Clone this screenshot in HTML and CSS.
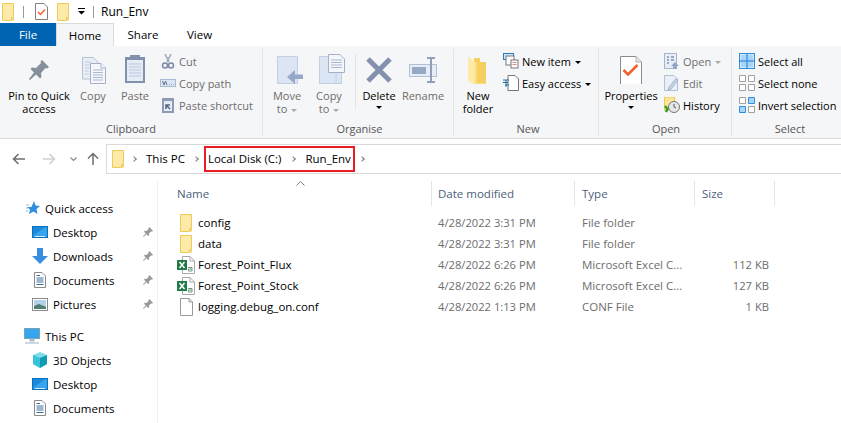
FILE: index.html
```html
<!DOCTYPE html>
<html lang="en">
<head>
<meta charset="utf-8">
<title>Run_Env</title>
<link rel="stylesheet" href="styles.css">
</head>
<body>
<svg class="defs" width="0" height="0" aria-hidden="true">
  <symbol id="folder" viewBox="0 0 14 18">
    <path d="M1.500 .5H12.500V14.500H10.500V17.500H1.500Z" fill="#fde9a8" stroke="#edcb5a"/>
    <path d="M11 15H13V17.500H11Z" fill="#f3d36e"/>
  </symbol>
  <symbol id="pin" viewBox="0 0 16 16">
    <path d="M10 0L16 6L14.500 7.500L13 7L9.500 10.500L10 13L8.500 14.500L5.500 11.500L1 16L0 15L4.500 10.500L1.500 7.500L3 6L5.500 6.500L9 3L8.500 1.500Z" fill="#9a9a9a"/>
  </symbol>
  <symbol id="csv" viewBox="0 0 18 18">
    <path d="M5.500 .5H13L17.500 5V17.500H5.500Z" fill="#fff" stroke="#a9a9a9"/>
    <path d="M13 .5V5H17.500" fill="none" stroke="#a9a9a9"/>
    <rect x="0" y="4" width="10" height="10" fill="#1f7a45"/>
    <path d="M2.500 6L7.500 12M7.500 6L2.500 12" stroke="#fff" stroke-width="1.500"/>
    <path d="M11 11.500H15V15H11.500V13H15" fill="none" stroke="#6f9a80"/>
  </symbol>
  <symbol id="monitor" viewBox="0 0 16 13">
    <rect x=".5" y=".5" width="15" height="11" fill="#1a8ade" stroke="#0a6fbd"/>
    <path d="M1 10L13 1H15V11H1Z" fill="#38a4ec"/>
    <path d="M3 10.500H13" stroke="#d5eaf9"/>
  </symbol>
  <symbol id="doc" viewBox="0 0 12 16">
    <path d="M.5 .5H8L11.500 4V15.500H.5Z" fill="#fff" stroke="#8a8a8a"/>
    <path d="M2.500 3.500H6M2.500 6H9.500M2.500 8H9.500M2.500 10H9.500M2.500 12.500H9.500" stroke="#3d6f9d"/>
  </symbol>
</svg>

<header class="titlebar">
  <svg class="tb-folder"><use href="#folder"/></svg>
  <span class="tb-sep"></span>
  <svg class="tb-doc" viewBox="0 0 13 17"><path d="M.5 .5H9L12.500 4V16.500H.5Z" fill="#fff" stroke="#808080"/><path d="M3 9L5.500 11.500L10 6.500" fill="none" stroke="#f2602a" stroke-width="1.500"/></svg>
  <svg class="tb-folder tb-folder2"><use href="#folder"/></svg>
  <svg class="tb-drop" viewBox="0 0 7 7"><path d="M0 .5H7" stroke="#000"/><path d="M0 3H7L3.500 6.500Z" fill="#000"/></svg>
  <span class="tb-sep tb-sep2"></span>
  <span class="tb-title">Run_Env</span>
</header>

<nav class="tabs">
  <span class="tab tab-file">File</span>
  <span class="tab tab-home">Home</span>
  <span class="tab tab-share">Share</span>
  <span class="tab tab-view">View</span>
</nav>

<section class="ribbon">
  <div class="group g-clipboard">
    <div class="tools">
      <div class="big w-pin">
        <svg class="big-ico" viewBox="0 0 32 32"><path d="M19 8L26 15L24.500 16.500L22.500 16L18 21L18.500 25L17 26.500L13 22.500L7 28L6 27L11 20.500L7.500 17L9 15.500L13 16L18 11L17.500 9.500Z" fill="#87909a"/></svg>
        <span>Pin to Quick</span><span>access</span>
      </div>
      <div class="big w-copy dim">
        <svg class="big-ico" viewBox="0 0 32 32"><path d="M5.500 5.500H16L21 10V27H5.500Z" fill="#e9edf5" stroke="#b6c1d6"/><path d="M8 10H14M8 13H18M8 16H18M8 19H12M8 22H12" stroke="#c3cee0"/><path d="M13.500 11.500H24L28.500 16V31.500H13.500Z" fill="#f4f6fa" stroke="#a3b0c9"/><path d="M24 11.500V16H28.500" fill="#fff" stroke="#a3b0c9"/><path d="M16 18H26M16 20.500H26M16 23H26M16 25.500H26M16 28H26" stroke="#a9b7cf"/></svg>
        <span>Copy</span>
      </div>
      <div class="big w-paste dim">
        <svg class="big-ico" viewBox="0 0 32 32"><rect x="6" y="5" width="20" height="26" fill="#8291ab"/><rect x="8" y="8" width="16" height="21" fill="#e6ecf6"/><path d="M10 12H22M10 15H22M10 18H22M10 21H22M10 24H22" stroke="#b8c6dc"/><rect x="11" y="3" width="10" height="5" fill="#8291ab"/></svg>
        <span>Paste</span>
      </div>
      <div class="smalls s-clip dim">
        <div class="small"><svg class="ico" viewBox="0 0 16 16"><path d="M5 1L9 9M11 1L7 9" stroke="#9aa4b5" stroke-width="1.500"/><circle cx="5" cy="12.500" r="2.500" fill="none" stroke="#7d8aa6" stroke-width="1.500"/><circle cx="11" cy="12.500" r="2.500" fill="none" stroke="#7d8aa6" stroke-width="1.500"/></svg><span>Cut</span></div>
        <div class="small"><svg class="ico" viewBox="0 0 16 16"><rect x=".5" y="4.500" width="15" height="7" fill="#dce6f4" stroke="#a8b8d0"/><path d="M2.500 6L4 10L5.500 6L7 10M9.500 9.500H10M11.500 9.500H12M13.500 9.500H14" stroke="#62718d" fill="none"/></svg><span>Copy path</span></div>
        <div class="small"><svg class="ico" viewBox="0 0 16 16"><rect x="2" y="1" width="12" height="15" fill="#8c9ab3"/><rect x="4" y="4" width="8" height="10" fill="#e6ecf6"/><path d="M6 12V8H10M6 8L10 12" stroke="#556480" stroke-width="1.500" fill="none"/></svg><span>Paste shortcut</span></div>
      </div>
    </div>
    <div class="group-label">Clipboard</div>
  </div>

  <div class="group g-organise">
    <div class="tools">
      <div class="big w-move dim">
        <svg class="big-ico" viewBox="0 0 32 32"><path d="M6.500 4.500H26.500V31.500H6.500Z" fill="#dbe5f3" stroke="#c2cfe2"/><path d="M32 22.500V27H24V32L16 25L24 18V22.500Z" fill="#95a9c6"/></svg>
        <span>Move</span><span>to <i class="caret caret-dim"></i></span>
      </div>
      <div class="big w-copyto dim">
        <svg class="big-ico" viewBox="0 0 32 32"><path d="M6.500 4.500H28.500V31.500H6.500Z" fill="#dbe5f3" stroke="#c2cfe2"/><path d="M23 31V5" stroke="#c2cfe2"/><path d="M15.500 2.500H27L31.500 7V20.500H15.500Z" fill="#f4f6fa" stroke="#a3b0c9"/><path d="M18 8H29M18 10.500H29M18 13H29M18 15.500H29" stroke="#a9b7cf"/></svg>
        <span>Copy</span><span>to <i class="caret caret-dim"></i></span>
      </div>
      <span class="inner-sep"></span>
      <div class="big w-delete">
        <svg class="big-ico" viewBox="0 0 32 32"><path d="M5 7L27 29M27 7L5 29" stroke="#8391ae" stroke-width="5"/></svg>
        <span>Delete</span><i class="caret"></i>
      </div>
      <div class="big w-rename dim">
        <svg class="big-ico" viewBox="0 0 32 32"><rect x="2.500" y="12.500" width="27" height="12" fill="#e6edf7" stroke="#b2c0d6"/><rect x="5" y="15" width="14" height="7" fill="#97a8c4"/><path d="M20 6H28M20 30H28M24 6V30" stroke="#8f9fbb" stroke-width="2"/></svg>
        <span>Rename</span>
      </div>
    </div>
    <div class="group-label">Organise</div>
  </div>

  <div class="group g-new">
    <div class="tools">
      <div class="big w-newf">
        <svg class="big-ico" viewBox="0 0 32 32"><path d="M12 6H18V10H24V31H12Z" fill="#f7cf60"/><path d="M6 5L13 10V33L6 29Z" fill="#fde9a8"/><path d="M13 10V33H24V31H15V10Z" fill="#fbdc7d"/></svg>
        <span>New</span><span>folder</span>
      </div>
      <div class="smalls s-new">
        <div class="small"><svg class="ico" viewBox="0 0 16 16"><rect x=".5" y=".5" width="10" height="6" fill="#cfe6f7" stroke="#2b7bb9"/><rect x="3" y="3" width="8" height="9" fill="#fff" stroke="#777"/><rect x="8" y="7" width="7" height="8" fill="#fff" stroke="#777"/><path d="M9.500 9.500H13.500M9.500 11.500H13.500" stroke="#d28a8a"/></svg><span>New item <i class="caret"></i></span></div>
        <div class="small"><svg class="ico" viewBox="0 0 16 16"><path d="M5 .5H12L15.500 4V15.500H5Z" fill="#fff" stroke="#777"/><path d="M0 5H6M0 7.500H5M2 10H6M3 5V12" stroke="#1f6fa8"/></svg><span>Easy access <i class="caret"></i></span></div>
      </div>
    </div>
    <div class="group-label">New</div>
  </div>

  <div class="group g-open">
    <div class="tools">
      <div class="big w-prop">
        <svg class="big-ico" viewBox="0 0 32 32"><path d="M5.500 4.500H21L26.500 10V32.500H5.500Z" fill="#fff" stroke="#8c8c8c"/><path d="M21 4.500V10H26.500" fill="#e7e7e7" stroke="#b0b0b0"/><path d="M8.500 18L13 22.500L22.500 13" fill="none" stroke="#f2602a" stroke-width="2.500"/></svg>
        <span>Properties</span><i class="caret"></i>
      </div>
      <div class="smalls s-open">
        <div class="small dim"><svg class="ico" viewBox="0 0 16 16"><rect x=".5" y=".5" width="12" height="15" fill="#e6edf7" stroke="#a6b4cc"/><path d="M3 4H5M3 7H5M3 10H5M7 4H10M7 7H10" stroke="#8191ad" stroke-width="1.500"/><path d="M11 9L15 13H13V16H9V13H7Z" fill="#95a6c2"/></svg><span>Open <i class="caret caret-dim"></i></span></div>
        <div class="small dim"><svg class="ico" viewBox="0 0 16 16"><path d="M.5 .5H10L13.500 4V15.500H.5Z" fill="#eaf0f8" stroke="#b2c0d6"/><path d="M14 5L7 14L4 15L5 12L12 3.500Z" fill="#c9d5e6" stroke="#a6b4cc"/></svg><span>Edit</span></div>
        <div class="small"><svg class="ico" viewBox="0 0 16 16"><rect x=".5" y="0" width="10" height="13" fill="#fde69c" stroke="#edc94f"/><circle cx="10" cy="10" r="5.500" fill="#e6e6e6" stroke="#777"/><path d="M10 7V10L12 11" stroke="#555" fill="none"/><path d="M1 9L3.500 12L2 15" fill="none" stroke="#33a02c" stroke-width="2.500"/></svg><span>History</span></div>
      </div>
    </div>
    <div class="group-label">Open</div>
  </div>

  <div class="group g-select">
    <div class="tools">
      <div class="smalls">
        <div class="small"><svg class="ico" viewBox="0 0 16 16"><rect x=".5" y=".5" width="15" height="15" fill="#fff" stroke="#2e8fe0"/><path d="M1.500 1.500H7V7H1.500ZM9 1.500H14.500V7H9ZM1.500 9H7V14.500H1.500ZM9 9H14.500V14.500H9Z" fill="#a8d4f5"/><path d="M8 0V16M0 8H16" stroke="#2e8fe0" stroke-width="1.500"/></svg><span>Select all</span></div>
        <div class="small"><svg class="ico" viewBox="0 0 16 16"><path d="M.5 .5H6.500V6.500H.5ZM9.500 .5H15.500V6.500H9.500ZM.5 9.500H6.500V15.500H.5ZM9.500 9.500H15.500V15.500H9.500Z" fill="#fff" stroke="#a0a0a0"/></svg><span>Select none</span></div>
        <div class="small"><svg class="ico" viewBox="0 0 16 16"><path d="M.5 .5H6.500V6.500H.5ZM9.500 9.500H15.500V15.500H9.500Z" fill="#fff" stroke="#a0a0a0"/><path d="M9.500 .5H15.500V6.500H9.500ZM.5 9.500H6.500V15.500H.5Z" fill="#a8d4f5" stroke="#2e8fe0"/></svg><span>Invert selection</span></div>
      </div>
    </div>
    <div class="group-label">Select</div>
  </div>
</section>

<section class="addressrow">
  <div class="navbtns">
    <svg class="nav nav-back" viewBox="0 0 14 12"><path d="M13 6H2M6.500 1L1.500 6L6.500 11" fill="none" stroke="#6d6d6d" stroke-width="1.500"/></svg>
    <svg class="nav nav-fwd" viewBox="0 0 14 12"><path d="M1 6H12M7.500 1L12.500 6L7.500 11" fill="none" stroke="#cfcfcf" stroke-width="1.500"/></svg>
    <svg class="nav nav-down" viewBox="0 0 7 5"><path d="M.5 .5L3.500 3.500L6.500 .5" fill="none" stroke="#8a8a8a" stroke-width="1.200"/></svg>
    <svg class="nav nav-up" viewBox="0 0 12 14"><path d="M6 13V2M1 6.500L6 1.500L11 6.500" fill="none" stroke="#6d6d6d" stroke-width="1.500"/></svg>
  </div>
  <div class="addressbox">
    <svg class="addr-folder"><use href="#folder"/></svg>
    <i class="crumb-sep sep-a"></i>
    <span class="crumb">This PC</span>
    <i class="crumb-sep sep-b"></i>
    <span class="crumb">Local Disk (C:)</span>
    <i class="crumb-sep sep-c"></i>
    <span class="crumb">Run_Env</span>
    <i class="crumb-sep sep-d"></i>
    <span class="highlight"></span>
  </div>
</section>

<main class="explorer">
  <aside class="sidebar">
    <div class="side-row head"><svg class="side-ico tall" viewBox="0 0 16 16"><path d="M10 1L11.500 5.500L16 6L12.500 9L13.500 14L9.500 11.500L5 14L6 9.500L3 7H7.500Z" fill="#2f8fdc"/><path d="M2 5H5M2 8H4M2 11H4" stroke="#8cc2ea"/></svg><span>Quick access</span></div>
    <div class="side-row sub"><svg class="side-ico"><use href="#monitor"/></svg><span>Desktop</span><svg class="side-pin"><use href="#pin"/></svg></div>
    <div class="side-row sub"><svg class="side-ico tall" viewBox="0 0 16 16"><path d="M5 0H11V8H16L8 16L0 8H5Z" fill="#3a8ee0"/></svg><span>Downloads</span><svg class="side-pin"><use href="#pin"/></svg></div>
    <div class="side-row sub"><svg class="side-ico ico-doc"><use href="#doc"/></svg><span>Documents</span><svg class="side-pin"><use href="#pin"/></svg></div>
    <div class="side-row sub"><svg class="side-ico" viewBox="0 0 16 13"><rect x=".5" y=".5" width="15" height="12" fill="#fff" stroke="#8a8a8a"/><rect x="2" y="2" width="12" height="9" fill="#b5d3ea"/><path d="M2 8L7 6L14 9V11H2Z" fill="#4d7d73"/></svg><span>Pictures</span><svg class="side-pin"><use href="#pin"/></svg></div>
    <div class="side-row head side-gap"><svg class="side-ico tall" viewBox="0 0 16 16"><rect x=".5" y=".5" width="15" height="10" fill="#35a5ee" stroke="#7a9fb8"/><path d="M6 11H10V13H6ZM1 15H15" stroke="#9ab0c2" fill="#c6d5e0"/></svg><span>This PC</span></div>
    <div class="side-row sub"><svg class="side-ico tall" viewBox="0 0 16 16"><path d="M8 0L15 3V12L8 16L1 12V3Z" fill="#7fdcea"/><path d="M8 6L15 3V12L8 16Z" fill="#0f9bb4"/><path d="M1 3L8 6V16L1 12Z" fill="#38c4d8"/></svg><span>3D Objects</span></div>
    <div class="side-row sub"><svg class="side-ico"><use href="#monitor"/></svg><span>Desktop</span></div>
    <div class="side-row sub"><svg class="side-ico ico-doc"><use href="#doc"/></svg><span>Documents</span></div>
  </aside>

  <div class="details">
    <div class="col-head">
      <div class="th th-name">Name<svg class="sort" viewBox="0 0 9 5"><path d="M.5 4.500L4.500 .5L8.500 4.500" fill="none" stroke="#7a7a7a"/></svg></div>
      <div class="th">Date modified</div>
      <div class="th th-type">Type</div>
      <div class="th th-size">Size</div>
    </div>
    <div class="rows">
      <div class="row">
        <div class="name"><svg class="folder-ico"><use href="#folder"/></svg>config</div>
        <div class="cell date">4/28/2022 3:31 PM</div><div class="cell type">File folder</div><div class="cell size"></div>
      </div>
      <div class="row">
        <div class="name"><svg class="folder-ico"><use href="#folder"/></svg>data</div>
        <div class="cell date">4/28/2022 3:31 PM</div><div class="cell type">File folder</div><div class="cell size"></div>
      </div>
      <div class="row">
        <div class="name"><svg class="file-ico"><use href="#csv"/></svg>Forest_Point_Flux</div>
        <div class="cell date">4/28/2022 6:26 PM</div><div class="cell type">Microsoft Excel C...</div><div class="cell size">112 KB</div>
      </div>
      <div class="row">
        <div class="name"><svg class="file-ico"><use href="#csv"/></svg>Forest_Point_Stock</div>
        <div class="cell date">4/28/2022 6:26 PM</div><div class="cell type">Microsoft Excel C...</div><div class="cell size">127 KB</div>
      </div>
      <div class="row">
        <div class="name"><svg class="file-ico" viewBox="0 0 18 18"><path d="M3.500 .5H12L15.500 4V17.500H3.500Z" fill="#fff" stroke="#9a9a9a"/><path d="M12 .5V4H15.500" fill="none" stroke="#9a9a9a"/></svg>logging.debug_on.conf</div>
        <div class="cell date">4/28/2022 1:13 PM</div><div class="cell type">CONF File</div><div class="cell size">1 KB</div>
      </div>
    </div>
  </div>
</main>
</body>
</html>
```

FILE: styles.css
```css
* { box-sizing: border-box; }
html, body { margin: 0; padding: 0; }
body {
  width: 841px;
  height: 423px;
  overflow: hidden;
  background: #fff;
  color: #000;
  font-family: "Open Sans", "Noto Sans", sans-serif;
  font-size: 11.5px;
  line-height: 15px;
}
.defs { position: absolute; }
i { font-style: normal; }

/* title bar */
.titlebar { height: 23px; display: flex; align-items: center; }
.tb-folder { width: 14px; height: 18px; margin-left: 1px; flex: none; }
.tb-folder2 { margin-left: 8px; }
.tb-sep { width: 1px; height: 12px; background: #9a9a9a; margin-left: 8px; }
.tb-doc { width: 13px; height: 17px; margin-left: 11px; }
.tb-drop { width: 7px; height: 7px; margin-left: 8px; }
.tb-sep2 { margin-left: 8px; }
.tb-title { margin-left: 7px; font-size: 12px; }

/* tabs */
.tabs { height: 23px; display: flex; }
.tab { display: flex; align-items: center; justify-content: center; }
.tab-file { width: 56px; background: #0063b1; color: #fff; }
.tab-home { width: 58px; background: #f5f6f7; border: 1px solid #dadbdc; border-bottom: 0; }
.tab-share { width: 58px; }
.tab-view { width: 55px; }

/* ribbon */
.ribbon {
  height: 93px;
  background: #f5f6f7;
  border-bottom: 1px solid #dadbdc;
  display: flex;
  padding-top: 3px;
  font-size: 11px;
}
.group {
  height: 87px;
  border-right: 1px solid #e1e3e6;
  display: flex;
  flex-direction: column;
  flex: none;
}
.g-clipboard { width: 263px; }
.g-organise { width: 191px; padding-left: 3px; }
.g-new { width: 145px; padding-left: 4px; }
.g-open { width: 133px; padding-left: 2px; }
.g-select { width: 109px; padding-left: 7px; border-right: 0; }
.tools { flex: 1; display: flex; }
.group-label { height: 17px; padding-top: 2px; text-align: center; color: #555; line-height: 15px; }

.big { display: flex; flex-direction: column; align-items: center; flex: none; padding-top: 3px; line-height: 13px; text-align: center; }
.big-ico { width: 32px; height: 32px; margin-bottom: 5px; flex: none; }
.w-pin { width: 78px; }
.w-copy { width: 30px; }
.w-paste { width: 34px; margin-left: 10px; }
.w-move, .w-copyto { width: 42px; }
.inner-sep { width: 1px; height: 55px; background: #e1e3e6; margin: 5px 4px 0 5px; flex: none; }
.w-delete { width: 40px; margin-left: -1px; }
.w-rename { width: 48px; }
.w-newf { width: 40px; }
.w-prop { width: 60px; }
.dim { color: #6d6d6d; }

.caret { display: inline-block; width: 0; height: 0; border: 3px solid transparent; border-top: 3px solid #000; border-bottom: 0; vertical-align: middle; margin-left: 1px; }
.big > .caret { margin: 4px 0 0; }
.caret-dim { border-top-color: #a8a8a8; }

.smalls { display: flex; flex-direction: column; padding-top: 1px; }
.small { height: 22px; display: flex; align-items: center; gap: 3px; white-space: nowrap; }
.ico { width: 16px; height: 16px; flex: none; }
.s-clip { margin-left: 8px; }
.s-new { margin-left: 5px; }
.s-open { margin-left: 3px; }

/* address row */
.addressrow { height: 42px; display: flex; padding-top: 5px; }
.navbtns { width: 106px; display: flex; align-items: center; height: 30px; }
.nav { flex: none; }
.nav-back { width: 14px; height: 12px; margin-left: 12px; }
.nav-fwd { width: 14px; height: 12px; margin-left: 16px; }
.nav-down { width: 7px; height: 5px; margin-left: 14px; }
.nav-up { width: 12px; height: 14px; margin-left: 10px; }
.addressbox {
  flex: 1;
  height: 30px;
  border: 1px solid #d9d9d9;
  border-right: 0;
  padding-bottom: 1px;
  display: flex;
  align-items: center;
  position: relative;
}
.addr-folder { width: 14px; height: 18px; margin-left: 4px; flex: none; }
.crumb { white-space: nowrap; }
.crumb-sep { width: 4px; height: 4px; flex: none; border-top: 1.500px solid #7d7d7d; border-right: 1.500px solid #7d7d7d; transform: rotate(45deg); }
.sep-a { margin: 0 10px 0 7px; }
.sep-b { margin: 0 10px 0 9px; }
.sep-c { margin: 0 10px 0 10px; }
.sep-d { margin-left: 9px; }
.highlight { position: absolute; left: 97px; top: 1px; width: 151px; height: 26px; border: 2px solid #ed1c24; }

/* main */
.explorer { display: flex; height: 242px; }
.sidebar { width: 158px; flex: none; border-right: 1px solid #f0f0f0; padding-top: 15px; }
.side-row { height: 24px; display: flex; align-items: center; gap: 5px; position: relative; }
.side-row > span { white-space: nowrap; }
.head { padding-left: 24px; }
.sub { padding-left: 32px; }
.side-gap { margin-top: 8px; }
.side-ico { width: 16px; height: 13px; flex: none; }
.tall { height: 16px; }
.ico-doc { width: 12px; height: 16px; margin: 0 2px; }
.side-pin { position: absolute; left: 143px; top: 7px; width: 10px; height: 10px; }

.details { flex: 1; }
.col-head { height: 25px; display: grid; grid-template-columns: 274px 143px 120px 80px; color: #4c607a; }
.th { display: flex; align-items: center; padding-left: 6px; border-right: 1px solid #e5e5e5; position: relative; }
.th-name { padding-left: 19px; }
.th-type { padding-left: 7px; }
.th-size { padding-left: 7px; }
.sort { position: absolute; left: 138px; top: 0; width: 9px; height: 5px; }
.rows { padding-top: 6px; }
.row { height: 21px; display: grid; grid-template-columns: 274px 143px 120px 74px; align-items: center; color: #6d6d6d; }
.name { color: #000; display: flex; align-items: center; padding-left: 22px; white-space: nowrap; }
.file-ico { width: 18px; height: 18px; flex: none; margin: 0 3px 0 -3px; }
.folder-ico { width: 14px; height: 18px; flex: none; margin: 0 5px 0 -1px; }
.cell { padding-left: 6px; white-space: nowrap; font-size: 11.200px; }
.type { padding-left: 7px; font-size: 11.500px; }
.size { text-align: right; padding: 0; }
```
